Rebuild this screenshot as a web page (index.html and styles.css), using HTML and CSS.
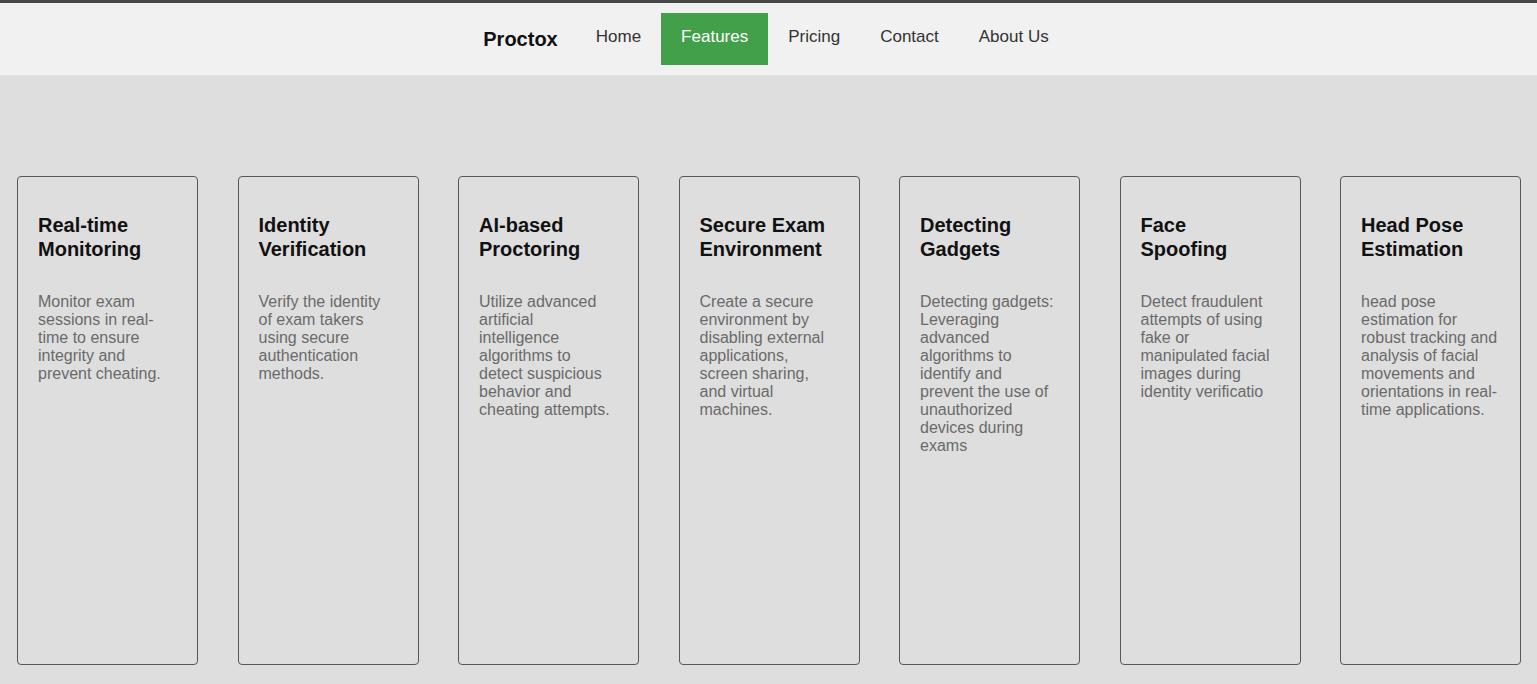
FILE: index.html
```html
<!DOCTYPE html>
<html lang="en">
<head>
<meta charset="utf-8">
<title>Proctox - Features</title>
<link rel="stylesheet" href="styles.css">
</head>
<body>
<header class="topbar">
  <div class="logo">Proctox</div>
  <nav class="nav">
    <a class="nav-link" href="#">Home</a>
    <a class="nav-link active" href="#">Features</a>
    <a class="nav-link" href="#">Pricing</a>
    <a class="nav-link" href="#">Contact</a>
    <a class="nav-link" href="#">About Us</a>
  </nav>
</header>
<main class="features">
  <section class="card">
    <h3 class="card-title">Real-time Monitoring</h3>
    <p class="card-text">Monitor exam sessions in real-time to ensure integrity and prevent cheating.</p>
  </section>
  <section class="card">
    <h3 class="card-title">Identity Verification</h3>
    <p class="card-text">Verify the identity of exam takers using secure authentication methods.</p>
  </section>
  <section class="card">
    <h3 class="card-title">AI-based Proctoring</h3>
    <p class="card-text">Utilize advanced artificial intelligence algorithms to detect suspicious behavior and cheating attempts.</p>
  </section>
  <section class="card">
    <h3 class="card-title">Secure Exam Environment</h3>
    <p class="card-text">Create a secure environment by disabling external applications, screen sharing, and virtual machines.</p>
  </section>
  <section class="card">
    <h3 class="card-title">Detecting Gadgets</h3>
    <p class="card-text">Detecting gadgets: Leveraging advanced algorithms to identify and prevent the use of unauthorized devices during exams</p>
  </section>
  <section class="card">
    <h3 class="card-title">Face Spoofing</h3>
    <p class="card-text">Detect fraudulent attempts of using fake or manipulated facial images during identity verificatio</p>
  </section>
  <section class="card">
    <h3 class="card-title">Head Pose Estimation</h3>
    <p class="card-text">head pose estimation for robust tracking and analysis of facial movements and orientations in real-time applications.</p>
  </section>
</main>
</body>
</html>
```

FILE: styles.css
```css
html, body {
  margin: 0;
  padding: 0;
}

body {
  font-family: "Liberation Sans", Arial, sans-serif;
  background: #dedede;
  color: #111;
}

.topbar {
  border-top: 3px solid #474747;
  background: #f1f1f1;
  height: 72px;
  border-bottom: 1px solid #e2e2e2;
  display: flex;
  align-items: center;
  justify-content: center;
  padding-left: 15px;
}

.logo {
  font-size: 20px;
  font-weight: bold;
  color: #111;
  margin-right: 18px;
}

.nav {
  display: flex;
  align-items: center;
}

.nav-link {
  display: block;
  height: 52px;
  box-sizing: border-box;
  padding: 14px 20px 0;
  font-size: 17px;
  line-height: 20px;
  color: #333;
  text-decoration: none;
}

.nav-link.active {
  background: #43a04a;
  color: #fff;
}

.features {
  display: flex;
  gap: 39.5px;
  padding: 100px 16px 19px 17px;
}

.card {
  flex: 1 1 0;
  min-width: 0;
  height: 489px;
  box-sizing: border-box;
  border: 1px solid #575757;
  border-radius: 4px;
  padding: 20px 21.5px 20px 20px;
}

.card-title {
  margin: 16px 8.5px 0 0;
  font-size: 20px;
  line-height: 24px;
  font-weight: bold;
  color: #111;
}

.card-text {
  margin: 32px 0 0;
  font-size: 16px;
  color: #6a6a6a;
}
```
